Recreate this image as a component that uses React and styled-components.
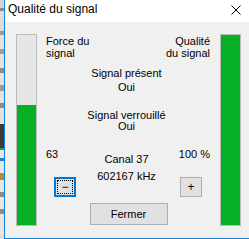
import React from 'react';
import styled, { createGlobalStyle } from 'styled-components';

const GlobalStyle = createGlobalStyle`
  html, body {
    margin: 0;
    padding: 0;
    width: 249px;
    height: 239px;
    overflow: hidden;
    background: #dedede;
  }
  body {
    font-family: "Liberation Sans", Arial, sans-serif;
    color: #000;
  }
`;

// bits of the window lying behind the dialog, on the left edge
const backdrop = [
  [8, '#d4d4d4'], [3, '#8a8a8a'], [20, '#dcdcdc'], [4, '#9a9a9a'], [14, '#e2e2e2'],
  [5, '#a0a0a0'], [14, '#e2e2e2'], [5, '#8c8c8c'], [12, '#e2e2e2'], [6, '#9a9a9a'],
  [12, '#e2e2e2'], [5, '#8c8c8c'], [16, '#e0e0e0'], [24, '#3a3a3a'], [2, '#2f9a3f'],
  [8, '#e6e6e6'], [3, '#1a7fd4'], [12, '#e6e6e6'], [7, '#b08a40'], [12, '#e6e6e6'],
  [5, '#8c8c8c'], [12, '#e6e6e6'], [5, '#8c8c8c'], [5, '#e6e6e6'], [16, '#e6e6e6'],
];

function SignalDialog() {
  const strength = 63;
  const quality = 100;

  return (
    <Screen>
      <Backdrop>
        {backdrop.map(([h, c], i) => (
          <BackdropPiece key={i} $h={h} $c={c} />
        ))}
      </Backdrop>
      <Window>
        <TitleBar>
          <Title>Qualité du signal</Title>
          <CloseIcon viewBox="0 0 10 10" width="10" height="10">
            <path d="M0.5 0.5 L9.5 9.5 M9.5 0.5 L0.5 9.5" stroke="#000" strokeWidth="1" fill="none" />
          </CloseIcon>
        </TitleBar>
        <Body>
          <Meter>
            <MeterFill style={{ height: `${strength}%` }} />
          </Meter>
          <Center>
            <TopLabels>
              <div>Force du<br />signal</div>
              <RightText>Qualité<br />du signal</RightText>
            </TopLabels>
            <Status $mt={7}>
              <StatusLine $lh={14}>Signal présent</StatusLine>
              <StatusLine $lh={14}>Oui</StatusLine>
            </Status>
            <Status $mt={16}>
              <StatusLine $lh={11}>Signal verrouillé</StatusLine>
              <StatusLine $lh={11}>Oui</StatusLine>
            </Status>
            <Readouts>
              <SideCol>
                <Value $mt={16}>{strength}</Value>
                <SmallButton $focused>−</SmallButton>
              </SideCol>
              <MidCol>
                <Value $mt={21}>Canal 37</Value>
                <Value $mt={4}>602167 kHz</Value>
              </MidCol>
              <SideCol $right>
                <Value $mt={16}>{quality} %</Value>
                <SmallButton>+</SmallButton>
              </SideCol>
            </Readouts>
            <CloseButton>Fermer</CloseButton>
          </Center>
          <Meter>
            <MeterFill style={{ height: `${quality}%` }} />
          </Meter>
        </Body>
      </Window>
    </Screen>
  );
}

export default function App() {
  return (
    <>
      <GlobalStyle />
      <SignalDialog />
    </>
  );
}

const Screen = styled.div`
  display: flex;
  width: 249px;
  height: 239px;
`;

const Backdrop = styled.div`
  width: 4px;
  flex-shrink: 0;
  display: flex;
  flex-direction: column;
`;

const BackdropPiece = styled.div`
  height: ${p => p.$h}px;
  background: ${p => p.$c};
  flex-shrink: 0;
`;

const Window = styled.div`
  flex: 1;
  min-width: 0;
  display: flex;
  flex-direction: column;
  border-left: 1px solid #1883d7;
  border-bottom: 1px solid #1883d7;
  background: #f0f0f0;
`;

const TitleBar = styled.div`
  height: 22px;
  box-sizing: border-box;
  background: #fff;
  display: flex;
  align-items: flex-start;
  justify-content: space-between;
  padding: 0 8px 0 3px;
`;

const Title = styled.span`
  font-size: 12px;
  line-height: 19px;
`;

const CloseIcon = styled.svg`
  margin-top: 5px;
  display: block;
`;

const Body = styled.div`
  height: 216px;
  box-sizing: border-box;
  display: flex;
  padding: 12px 8px 12px 11px;
`;

const Meter = styled.div`
  width: 21px;
  flex-shrink: 0;
  box-sizing: border-box;
  border: 1px solid #bcbcbc;
  background: #e6e6e6;
  display: flex;
  flex-direction: column;
  justify-content: flex-end;
`;

const MeterFill = styled.div`
  background: #06b025;
`;

const Center = styled.div`
  flex: 1;
  display: flex;
  flex-direction: column;
  font-size: 11px;
`;

const TopLabels = styled.div`
  display: flex;
  justify-content: space-between;
  padding: 0 10px 0 9px;
  margin-top: 1px;
  line-height: 12px;
`;

const RightText = styled.div`
  text-align: right;
`;

const Status = styled.div`
  margin-top: ${p => p.$mt}px;
  padding-right: 4px;
  text-align: center;
`;

const StatusLine = styled.div`
  height: ${p => p.$lh}px;
  line-height: ${p => p.$lh}px;
  overflow: hidden;
`;

const Readouts = styled.div`
  display: grid;
  grid-template-columns: 1fr auto 1fr;
`;

const SideCol = styled.div`
  display: flex;
  flex-direction: column;
  align-items: ${p => (p.$right ? 'flex-end' : 'flex-start')};
  padding: ${p => (p.$right ? '0 10px 0 0' : '0 0 0 9px')};
`;

const MidCol = styled.div`
  display: flex;
  flex-direction: column;
  align-items: center;
  padding-right: 4px;
`;

const Value = styled.div`
  margin-top: ${p => p.$mt}px;
  line-height: 13px;
  white-space: nowrap;
`;

const SmallButton = styled.div`
  width: 22px;
  height: 20px;
  box-sizing: border-box;
  margin: 16px 8px 0 8px;
  display: flex;
  align-items: center;
  justify-content: center;
  font-size: 12px;
  background: #e1e1e1;
  border: ${p => (p.$focused ? '2px solid #0078d7' : '1px solid #adadad')};
  outline: ${p => (p.$focused ? '1px dotted #000' : 'none')};
  outline-offset: -4px;
`;

const CloseButton = styled.div`
  align-self: center;
  width: 78px;
  height: 22px;
  box-sizing: border-box;
  margin-top: 6px;
  display: flex;
  align-items: center;
  justify-content: center;
  background: #e1e1e1;
  border: 1px solid #adadad;
`;
